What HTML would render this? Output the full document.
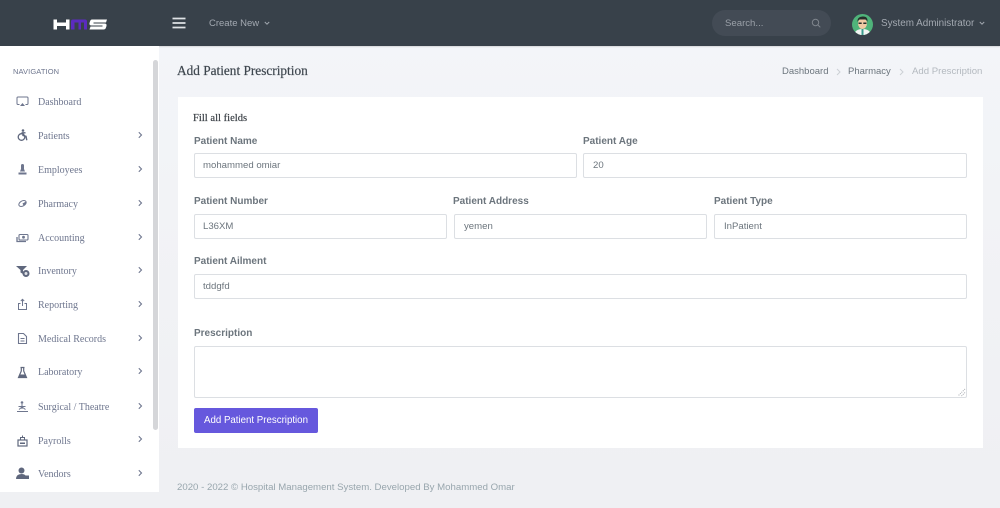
<!DOCTYPE html>
<html>
<head>
<meta charset="utf-8">
<style>
html,body{margin:0;padding:0;width:1000px;height:508px;overflow:hidden;background:linear-gradient(#f3f5f9 40px,#f2f3f6 200px,#eff0f3 480px);font-family:"Liberation Sans",sans-serif}
#wrap{position:absolute;left:0;top:0;width:1000px;height:508px;overflow:hidden;filter:blur(.35px)}
.a{position:absolute;white-space:nowrap}
#top{left:0;top:0;width:1000px;height:46px;background:#38414a;box-shadow:0 1px 1px rgba(0,0,0,.12)}
#side{left:0;top:46px;width:159px;height:446px;background:#fff}
.scroll{left:153px;top:60px;width:5px;height:370px;background:#d5d6d9;border-radius:3px}
.nav{font-family:"Liberation Serif",serif;font-size:10px;color:#6e768e;line-height:14px;left:38px}
.chev{left:137px;width:6px;height:10px}
.ic{left:15px;width:15px;height:15px}
.lab{font-size:10px;font-weight:bold;color:#6c757d;line-height:14px}
.inp{box-sizing:border-box;height:25px;background:#fff;border:1px solid #dcdfe3;border-radius:2px;font-size:9.600px;line-height:24px;color:#6c757d;padding-left:9px}
</style>
</head>
<body>
<div id="wrap">
<div class="a" id="top"></div>

<!-- logo -->
<svg class="a" style="left:52px;top:17px" width="56" height="15" viewBox="0 0 56 15">
<path d="M1.500 2.500h3.500v3h9v-3h3.500v10h-3.500v-3.500h-9v3.500h-3.500z" fill="#fff"/>
<path d="M19 4.500q0-2 2-2h12q2 0 2 2v8h-3v-7h-3v7h-2.500v-7h-4v7h-3.500z" fill="#5b2bc0"/>
<path d="M39 2.500h16l-1 3h-12.500v1h11q2.500 0 2 2.500l-.5 1.500q-.5 2-2.500 2h-14l1-3h12v-1h-11q-2.500 0-2-2.500l.5-1.500q.5-2 2-2z" fill="#fff"/>
</svg>

<!-- hamburger -->
<svg class="a" style="left:172px;top:17px" width="14" height="12"><path d="M0.500 1.500h13M0.500 6h13M0.500 10.500h13" stroke="#dfe2e6" stroke-width="1.700"/></svg>
<div class="a" style="left:209px;top:17px;font-size:9.500px;line-height:14px;color:#a3a9b1">Create New</div>
<svg class="a" style="left:264px;top:21px" width="6" height="5"><path d="M.8 1l2.200 2.200L5.200 1" stroke="#a3a9b1" stroke-width="1" fill="none"/></svg>

<!-- search -->
<div class="a" style="left:712px;top:10px;width:119px;height:26px;border-radius:13px;background:#434b55"></div>
<div class="a" style="left:725px;top:17px;font-size:9.600px;line-height:14px;color:#9aa0a8">Search...</div>
<svg class="a" style="left:811px;top:18px" width="10" height="10"><circle cx="4.500" cy="4.500" r="3.200" stroke="#7f858d" fill="none"/><path d="M7 7l2.300 2.300" stroke="#7f858d"/></svg>

<!-- avatar -->
<svg class="a" style="left:852px;top:14px" width="21" height="21" viewBox="0 0 21 21">
<clipPath id="c"><circle cx="10.500" cy="10.500" r="10.500"/></clipPath>
<g clip-path="url(#c)"><rect width="21" height="21" fill="#4fb37a"/>
<path d="M2 21q1-6 8.500-6T19 21z" fill="#f2f5f3"/>
<rect x="9.500" y="15" width="2" height="6" fill="#3a9c8e"/>
<ellipse cx="10.500" cy="9.500" rx="4.500" ry="5.500" fill="#f0c9a4"/>
<path d="M5.500 8q-.5-5 5-5.500t5 5.500q-1-2.500-2.500-2.500h-5q-1.500 0-2.500 2.500z" fill="#26302c"/>
<path d="M6.500 8.500h3.200v1.500h-3.200zM11.300 8.500h3.200v1.500h-3.200z" fill="#26302c"/></g>
</svg>
<div class="a" style="left:881px;top:17px;font-size:9.900px;line-height:14px;color:#a3a9b1">System Administrator</div>
<svg class="a" style="left:979px;top:21px" width="6" height="5"><path d="M.8 1l2.200 2.200L5.200 1" stroke="#a3a9b1" stroke-width="1" fill="none"/></svg>

<!-- sidebar -->
<div class="a" id="side"></div>
<div class="a scroll"></div>
<div class="a" style="left:13px;top:66px;font-size:7.500px;line-height:11px;color:#6e768e;letter-spacing:.1px">NAVIGATION</div>

<div class="a nav" style="top:96px">Dashboard</div>
<div class="a nav" style="top:130px">Patients</div>
<div class="a nav" style="top:164px">Employees</div>
<div class="a nav" style="top:198px">Pharmacy</div>
<div class="a nav" style="top:232px">Accounting</div>
<div class="a nav" style="top:265px">Inventory</div>
<div class="a nav" style="top:299px">Reporting</div>
<div class="a nav" style="top:333px">Medical Records</div>
<div class="a nav" style="top:366px">Laboratory</div>
<div class="a nav" style="top:401px">Surgical / Theatre</div>
<div class="a nav" style="top:435px">Payrolls</div>
<div class="a nav" style="top:468px">Vendors</div>

<svg class="a chev" style="top:130px" viewBox="0 0 6 10"><path d="M1.800 2.200l2.700 2.800-2.700 2.800" stroke="#6e768e" stroke-width="1.100" fill="none"/></svg>
<svg class="a chev" style="top:164px" viewBox="0 0 6 10"><path d="M1.800 2.200l2.700 2.800-2.700 2.800" stroke="#6e768e" stroke-width="1.100" fill="none"/></svg>
<svg class="a chev" style="top:198px" viewBox="0 0 6 10"><path d="M1.800 2.200l2.700 2.800-2.700 2.800" stroke="#6e768e" stroke-width="1.100" fill="none"/></svg>
<svg class="a chev" style="top:232px" viewBox="0 0 6 10"><path d="M1.800 2.200l2.700 2.800-2.700 2.800" stroke="#6e768e" stroke-width="1.100" fill="none"/></svg>
<svg class="a chev" style="top:265px" viewBox="0 0 6 10"><path d="M1.800 2.200l2.700 2.800-2.700 2.800" stroke="#6e768e" stroke-width="1.100" fill="none"/></svg>
<svg class="a chev" style="top:299px" viewBox="0 0 6 10"><path d="M1.800 2.200l2.700 2.800-2.700 2.800" stroke="#6e768e" stroke-width="1.100" fill="none"/></svg>
<svg class="a chev" style="top:333px" viewBox="0 0 6 10"><path d="M1.800 2.200l2.700 2.800-2.700 2.800" stroke="#6e768e" stroke-width="1.100" fill="none"/></svg>
<svg class="a chev" style="top:366px" viewBox="0 0 6 10"><path d="M1.800 2.200l2.700 2.800-2.700 2.800" stroke="#6e768e" stroke-width="1.100" fill="none"/></svg>
<svg class="a chev" style="top:401px" viewBox="0 0 6 10"><path d="M1.800 2.200l2.700 2.800-2.700 2.800" stroke="#6e768e" stroke-width="1.100" fill="none"/></svg>
<svg class="a chev" style="top:434px" viewBox="0 0 6 10"><path d="M1.800 2.200l2.700 2.800-2.700 2.800" stroke="#6e768e" stroke-width="1.100" fill="none"/></svg>
<svg class="a chev" style="top:468px" viewBox="0 0 6 10"><path d="M1.800 2.200l2.700 2.800-2.700 2.800" stroke="#6e768e" stroke-width="1.100" fill="none"/></svg>

<!-- icons -->
<svg class="a ic" style="top:94px" viewBox="0 0 15 15"><path d="M10.500 10.500h1.500q1 0 1-1V4q0-1-1-1H3q-1 0-1 1v5.500q0 1 1 1h1.500" stroke="#6e768e" fill="none"/><path d="M5 12l2.500-3 2.500 3z" fill="#6e768e"/></svg>
<svg class="a ic" style="top:128px" viewBox="0 0 15 15"><circle cx="6.500" cy="9" r="3.300" stroke="#5f677d" stroke-width="1.300" fill="none"/><path d="M6.500 4.800h4M8 4.500v3l3 .8.800 4" stroke="#5f677d" stroke-width="1.400" fill="none"/><circle cx="8" cy="2.500" r="1.300" fill="#5f677d"/></svg>
<svg class="a ic" style="top:162px" viewBox="0 0 15 15"><path d="M6 3.500q0-1.500 1.500-1.500T9 3.500V7l1 2.500H5L6 7zM3.500 10.500h8v2h-8z" fill="#6e768e"/></svg>
<svg class="a ic" style="top:196px" viewBox="0 0 15 15"><ellipse cx="7.500" cy="7.500" rx="4" ry="2.500" transform="rotate(-30 7.500 7.500)" stroke="#6e768e" fill="#fff"/><path d="M7.500 7.500l3.300-1.900q1 1.200.2 2.500-1 1.400-2.500 1.400z" fill="#6e768e"/></svg>
<svg class="a ic" style="top:230px" viewBox="0 0 15 15"><rect x="4" y="4.500" width="9" height="5.500" rx="1" stroke="#6e768e" stroke-width="1.100" fill="none"/><circle cx="8.500" cy="7.200" r="1.400" fill="#6e768e"/><path d="M2 7v4.500h9" stroke="#6e768e" stroke-width="1.300" fill="none"/></svg>
<svg class="a ic" style="top:263px" viewBox="0 0 15 15"><path d="M1 3h11l-4 4v4l-2.500-1.500V7z" fill="#5f677d"/><circle cx="11" cy="10.500" r="3.500" fill="#5f677d"/><circle cx="11" cy="10.500" r="1.500" fill="#dfe1e6"/></svg>
<svg class="a ic" style="top:297px" viewBox="0 0 15 15"><path d="M5.500 6.500H3.500v6h8v-6H9.500M7.500 9V2.500M5.800 4l1.700-1.700L9.200 4" stroke="#6e768e" fill="none"/></svg>
<svg class="a ic" style="top:331px" viewBox="0 0 15 15"><path d="M3.500 2.500h5l3 3v7h-8z" stroke="#6e768e" stroke-width="1.100" fill="none"/><path d="M5.500 7.500h4M5.500 10h4" stroke="#6e768e"/></svg>
<svg class="a ic" style="top:365px" viewBox="0 0 15 15"><path d="M5.500 2.500h4M6.300 2.500V6L3.500 12.500h8L8.700 6V2.500" stroke="#5f677d" stroke-width="1.200" fill="none"/><path d="M4.500 9.500h6l1 3h-8z" fill="#5f677d"/></svg>
<svg class="a ic" style="top:399px" viewBox="0 0 15 15"><circle cx="7" cy="3.500" r="1.300" fill="#6e768e"/><path d="M2 12.500h11M7 5v5M3.500 7.500h7M4 10.500l3-2.500 3.500 2.500" stroke="#6e768e" fill="none"/></svg>
<svg class="a ic" style="top:433px" viewBox="0 0 15 15"><rect x="3" y="7" width="9" height="6" stroke="#5f677d" stroke-width="1.200" fill="none"/><path d="M5.500 7V4.500h4V7M7.500 4.500V2.500" stroke="#5f677d" fill="none"/><rect x="5" y="9.500" width="5" height="1.500" fill="#5f677d"/></svg>
<svg class="a ic" style="top:466px" viewBox="0 0 15 15"><circle cx="6.500" cy="4.500" r="3" fill="#5f677d"/><path d="M1 13q.2-5 5.500-5 3 0 4 1.500h3.500V13z" fill="#5f677d"/></svg>

<!-- page head -->
<div class="a" style="left:177px;top:63px;font-family:'Liberation Serif',serif;font-size:13.300px;line-height:16px;color:#3f474f;-webkit-text-stroke:.2px #3f474f">Add Patient Prescription</div>
<div class="a" style="left:782px;top:65px;font-size:9.500px;line-height:14px;color:#6c757d">Dashboard</div>
<div class="a" style="left:848px;top:65px;font-size:9.500px;line-height:14px;color:#6c757d">Pharmacy</div>
<div class="a" style="left:912px;top:65px;font-size:9.600px;line-height:14px;color:#b4b9bf">Add Prescription</div>
<svg class="a" style="left:836px;top:68px" width="5" height="8"><path d="M1 1l3 3-3 3" stroke="#ccd0d5" fill="none"/></svg>
<svg class="a" style="left:899px;top:68px" width="5" height="8"><path d="M1 1l3 3-3 3" stroke="#ccd0d5" fill="none"/></svg>

<!-- card -->
<div class="a" style="left:178px;top:97px;width:805px;height:351px;background:#fff"></div>
<div class="a" style="left:193px;top:112px;font-family:'Liberation Serif',serif;font-size:10.600px;line-height:14px;color:#343a40;-webkit-text-stroke:.15px #343a40">Fill all fields</div>

<div class="a lab" style="left:194px;top:135px">Patient Name</div>
<div class="a inp" style="left:194px;top:153px;width:383px;padding-left:8px">mohammed omiar</div>
<div class="a lab" style="left:583px;top:135px">Patient Age</div>
<div class="a inp" style="left:583px;top:153px;width:384px">20</div>

<div class="a lab" style="left:194px;top:195px">Patient Number</div>
<div class="a inp" style="left:194px;top:214px;width:253px;padding-left:8px">L36XM</div>
<div class="a lab" style="left:453px;top:195px">Patient Address</div>
<div class="a inp" style="left:454px;top:214px;width:253px">yemen</div>
<div class="a lab" style="left:714px;top:195px">Patient Type</div>
<div class="a inp" style="left:714px;top:214px;width:253px">InPatient</div>

<div class="a lab" style="left:194px;top:255px">Patient Ailment</div>
<div class="a inp" style="left:194px;top:274px;width:773px;padding-left:8px">tddgfd</div>

<div class="a lab" style="left:194px;top:327px">Prescription</div>
<div class="a inp" style="left:194px;top:346px;width:773px;height:52px"></div>
<svg class="a" style="left:957px;top:388px" width="9" height="9"><path d="M8 1L1 8M8 4.500L4.500 8" stroke="#a9adb2" stroke-dasharray="1 1"/></svg>

<div class="a" style="left:194px;top:408px;width:124px;height:25px;background:#6658dd;border-radius:2px;color:#fff;font-size:9.700px;line-height:25px;text-align:center">Add Patient Prescription</div>

<!-- footer -->
<div class="a" style="left:177px;top:481px;font-size:9.630px;line-height:14px;color:#98a6ad">2020 - 2022 © Hospital Management System. Developed By Mohammed Omar</div>
</div>
</body>
</html>
